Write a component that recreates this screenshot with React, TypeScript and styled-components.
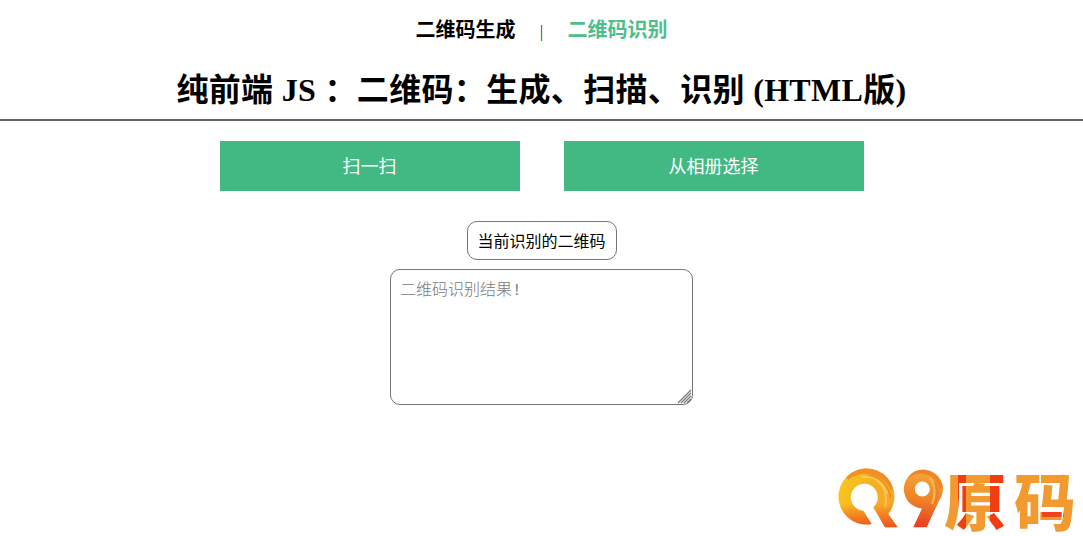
import React from "react";
import styled, { createGlobalStyle } from "styled-components";

const Global = createGlobalStyle`
  html, body { margin: 0; padding: 0; background: #fff; overflow: hidden; }
  body { font-family: "Liberation Serif", "Noto Sans CJK SC", serif; color: #000; }
`;

const Page = styled.div`
  position: relative;
  width: 1083px;
  height: 536px;
  overflow: hidden;
`;

const Nav = styled.nav`
  display: flex;
  justify-content: center;
  align-items: center;
  height: 60px;
  font-size: 20px;
  font-weight: 700;
  line-height: 60px;
`;

const NavLink = styled.a<{ $active?: boolean }>`
  color: ${(p) => (p.$active ? "#4fbd8c" : "#000")};
  text-decoration: none;
`;

const Sep = styled.span`
  width: 52px;
  text-align: center;
  font-family: "Liberation Serif", serif;
  font-size: 17px;
  font-weight: 400;
  color: #333;
  padding-top: 3px;
`;

const Title = styled.h1`
  margin: 0;
  height: 61px;
  line-height: 60px;
  font-size: 32px;
  font-weight: 700;
  letter-spacing: 0.33px;
  text-align: center;
  border-bottom: 2px solid #666;
  box-sizing: border-box;
`;

const Actions = styled.div`
  display: flex;
  justify-content: center;
  gap: 44px;
  margin-top: 20px;
`;

const ActionButton = styled.button`
  width: 300px;
  height: 50px;
  padding: 0 0 2px;
  border: 0;
  background: #42b983;
  color: #fff;
  font-family: "Noto Sans CJK SC", sans-serif;
  font-size: 18px;
  font-weight: 400;
`;

const Result = styled.div`
  display: flex;
  flex-direction: column;
  align-items: center;
  margin-top: 30px;
`;

const Label = styled.div`
  box-sizing: border-box;
  width: 150px;
  height: 39px;
  line-height: 36px;
  text-align: center;
  border: 1px solid #777;
  border-radius: 10px;
  font-family: "Noto Sans CJK SC", sans-serif;
  font-size: 16px;
  font-weight: 400;
`;

const OutputWrap = styled.div`
  position: relative;
  width: 303px;
  height: 136px;
  margin-top: 9px;
`;

const Output = styled.textarea`
  box-sizing: border-box;
  display: block;
  width: 100%;
  height: 100%;
  margin: 0;
  padding: 10px 9px;
  border: 1px solid #777;
  border-radius: 10px;
  outline: none;
  resize: none;
  font-family: "Liberation Mono", "Noto Sans CJK SC", monospace;
  font-size: 16px;
  line-height: 23px;
  &::placeholder { color: #777; opacity: 1; font-weight: 300; }
`;

const Grip = styled.svg`
  position: absolute;
  right: 1px;
  bottom: 1px;
  width: 15px;
  height: 15px;
  pointer-events: none;
`;

const Logo = styled.div`
  position: absolute;
  right: 7px;
  bottom: 1px;
  display: flex;
  align-items: center;
  height: 72px;
`;

const LogoMark = styled.svg`
  display: block;
  width: 107px;
  height: 62px;
  flex: none;
`;

const LogoText = styled.span`
  display: flex;
  margin-left: -1px;
  gap: 8px;
  font-family: "Noto Sans CJK SC", sans-serif;
  font-size: 62px;
  font-weight: 900;
  line-height: 72px;
  white-space: nowrap;
`;

const LogoChar = styled.span<{ $second?: boolean }>`
  display: block;
  color: transparent;
  -webkit-background-clip: text;
  background-clip: text;
  background-image: ${(p) =>
    p.$second
      ? "linear-gradient(#ee4418, #ee4418), linear-gradient(#f29a30, #f29a30)"
      : "linear-gradient(90deg, #f29a30 0 22%, #ef3f12 22% 36%, #f29a30 36% 74%, #ef3f12 74%)"};
  background-repeat: no-repeat;
  background-size: ${(p) => (p.$second ? "35% 11%, 100% 100%" : "100% 100%")};
  background-position: ${(p) => (p.$second ? "70% 72%, 0 0" : "0 0")};
`;

const Q_PATH =
  "M33.700 56A28 28 0 1 1 50.300 46L59.700 59.300H47L35.300 39.300A13.500 13.500 0 1 0 25.300 42.700Z";
const NINE_PATH =
  "M75.300 59.300L84 40.500A19.500 19.500 0 1 1 101 32.700L88.700 59.300ZM84.300 13.500A7.500 7.500 0 1 0 84.300 28.500A7.500 7.500 0 1 0 84.300 13.500Z";

export default function App() {
  return (
    <Page>
      <Global />
      <Nav>
        <NavLink href="#">二维码生成</NavLink>
        <Sep>|</Sep>
        <NavLink href="#" $active>二维码识别</NavLink>
      </Nav>
      <Title>纯前端 JS ：二维码：生成、扫描、识别 (HTML版)</Title>
      <Actions>
        <ActionButton>扫一扫</ActionButton>
        <ActionButton>从相册选择</ActionButton>
      </Actions>
      <Result>
        <Label>当前识别的二维码</Label>
        <OutputWrap>
          <Output placeholder="二维码识别结果!" />
          <Grip viewBox="0 0 15 15" aria-hidden="true">
            <path
              d="M1 14L14 1M4 14L14 4M7 14L14 7M10 14L14 10"
              stroke="#777"
              strokeWidth="1.200"
              fill="none"
            />
          </Grip>
        </OutputWrap>
      </Result>
      <Logo>
        <LogoMark viewBox="0 0 107 62" aria-hidden="true">
          <defs>
            <linearGradient id="qBase" x1="0" y1="0.3" x2="1" y2="0.6">
              <stop offset="0" stopColor="#f8c61c" />
              <stop offset="0.55" stopColor="#f6b024" />
              <stop offset="1" stopColor="#f5a52c" />
            </linearGradient>
            <linearGradient id="qHot" x1="0" y1="0" x2="0" y2="1">
              <stop offset="0.6" stopColor="#ec4a1c" stopOpacity="0" />
              <stop offset="1" stopColor="#ec4a1c" stopOpacity="0.9" />
            </linearGradient>
            <linearGradient id="nBase" x1="0.5" y1="0" x2="0.4" y2="1">
              <stop offset="0" stopColor="#f5a836" />
              <stop offset="0.5" stopColor="#f08428" />
              <stop offset="1" stopColor="#e63c22" />
            </linearGradient>
            <clipPath id="qClip">
              <path d={Q_PATH} />
            </clipPath>
            <clipPath id="nClip">
              <path d={NINE_PATH} clipRule="evenodd" />
            </clipPath>
          </defs>
          <path fill="url(#qBase)" d={Q_PATH} />
          <g clipPath="url(#qClip)" fill="none">
            <path d="M8 9C20 -1 44 -2 56 20" stroke="#ef8a22" strokeWidth="7" opacity="0.85" />
            <path d="M24 9C36 7 46 14 50 26" stroke="#f9d05a" strokeWidth="2" opacity="0.8" />
            <path d="M30 7C42 8 50 18 53 30" stroke="#f08a26" strokeWidth="2" opacity="0.8" />
            <path d="M38 12C46 16 50 28 47 40" stroke="#f9cf60" strokeWidth="2" opacity="0.7" />
          </g>
          <path fill="url(#qHot)" d={Q_PATH} />
          <path fill="url(#nBase)" fillRule="evenodd" d={NINE_PATH} />
          <g clipPath="url(#nClip)" fill="none">
            <path d="M70 8C80 0 98 2 104 20" stroke="#ee7d26" strokeWidth="4" opacity="0.8" />
            <path d="M92 10C97 16 98 26 94 36" stroke="#f9c45c" strokeWidth="2" opacity="0.8" />
            <path d="M97 14C101 22 100 30 95 42" stroke="#ef7b26" strokeWidth="2" opacity="0.7" />
          </g>
        </LogoMark>
        <LogoText>
          <LogoChar>原</LogoChar>
          <LogoChar $second>码</LogoChar>
        </LogoText>
      </Logo>
    </Page>
  );
}
